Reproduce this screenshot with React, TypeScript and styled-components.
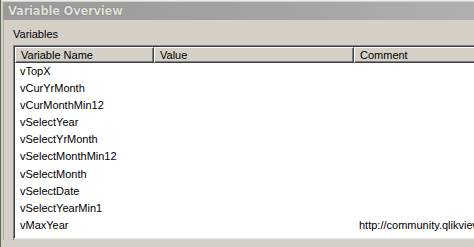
import styled, { createGlobalStyle } from "styled-components";

const GlobalStyle = createGlobalStyle`
  html, body {
    margin: 0;
    padding: 0;
    background: #d4d0c8;
  }
  body {
    font-family: "Liberation Sans", Arial, sans-serif;
    font-size: 11px;
    color: #000;
  }
`;

const rows: { name: string; value?: string; comment?: string }[] = [
  { name: "vTopX" },
  { name: "vCurYrMonth" },
  { name: "vCurMonthMin12" },
  { name: "vSelectYear" },
  { name: "vSelectYrMonth" },
  { name: "vSelectMonthMin12" },
  { name: "vSelectMonth" },
  { name: "vSelectDate" },
  { name: "vSelectYearMin1" },
  { name: "vMaxYear", comment: "http://community.qlikview.com" },
  { name: "vMaxMonth", comment: "http://community.qlikview.com" },
];

const columns = [
  { title: "Variable Name", width: 139 },
  { title: "Value", width: 200 },
  { title: "Comment", width: 260 },
];

export default function App() {
  return (
    <>
      <GlobalStyle />
      <Window>
        <TitleBar>Variable Overview</TitleBar>
        <Body>
          <GroupLabel>Variables</GroupLabel>
          <ListView>
            <HeaderRow>
              {columns.map((c) => (
                <HeaderCell key={c.title} $width={c.width}>
                  {c.title}
                </HeaderCell>
              ))}
            </HeaderRow>
            {rows.map((r) => (
              <Row key={r.name}>
                <Cell $width={columns[0].width}>{r.name}</Cell>
                <Cell $width={columns[1].width}>{r.value}</Cell>
                <Cell $width={columns[2].width}>{r.comment}</Cell>
              </Row>
            ))}
          </ListView>
        </Body>
      </Window>
    </>
  );
}

const Window = styled.div`
  width: 474px;
  height: 247px;
  overflow: hidden;
  box-sizing: border-box;
  padding-top: 2px;
  border-left: 1px solid #5b6e45;
  background: #d4d0c8;
  box-shadow: inset 0 1px 0 #ececec;
`;

const TitleBar = styled.div`
  height: 18px;
  margin-left: 2px;
  padding-left: 5px;
  display: flex;
  align-items: center;
  background: linear-gradient(to right, #9a9a9a, #a4a4a4 60%, #b0b0b0);
  color: #e2dfd8;
  font-family: "DejaVu Sans", "Liberation Sans", sans-serif;
  font-weight: bold;
  font-size: 11.5px;
  letter-spacing: -0.2px;
  text-shadow: 0 0 1px #5e5e5e;
`;

const Body = styled.div`
  margin-left: 2px;
  border-left: 1px solid #a8a8a8;
  padding-left: 9px;
`;

const GroupLabel = styled.div`
  height: 13px;
  padding-top: 8px;
  padding-bottom: 4px;
  line-height: 13px;
`;

const ListView = styled.div`
  width: 640px;
  height: 195px;
  overflow: hidden;
  box-sizing: border-box;
  border-top: 1px solid #808080;
  border-left: 1px solid #808080;
  box-shadow: inset 1px 1px 0 #404040;
  padding: 1px 0 0 1px;
  background: #fff;
  position: relative;
  &::after {
    content: "";
    position: absolute;
    left: 0;
    right: 0;
    bottom: 0;
    height: 1px;
    background: #d4d0c8;
    box-shadow: 0 -1px 0 #e8e8e8;
  }
`;

const HeaderRow = styled.div`
  display: flex;
  height: 16px;
`;

const HeaderCell = styled.div<{ $width: number }>`
  width: ${(p) => p.$width}px;
  flex: none;
  box-sizing: border-box;
  height: 16px;
  padding-left: 5px;
  line-height: 14px;
  background: #d4d0c8;
  border-top: 1px solid #fff;
  border-left: 1px solid #fff;
  border-right: 1px solid #404040;
  border-bottom: 1px solid #404040;
  box-shadow: inset -1px -1px 0 #808080;
  white-space: nowrap;
  overflow: hidden;
`;

const Row = styled.div`
  display: flex;
  height: 17.1px;
`;

const Cell = styled.div<{ $width: number }>`
  width: ${(p) => p.$width}px;
  flex: none;
  box-sizing: border-box;
  padding-left: 5px;
  line-height: 17px;
  white-space: nowrap;
  overflow: hidden;
`;
